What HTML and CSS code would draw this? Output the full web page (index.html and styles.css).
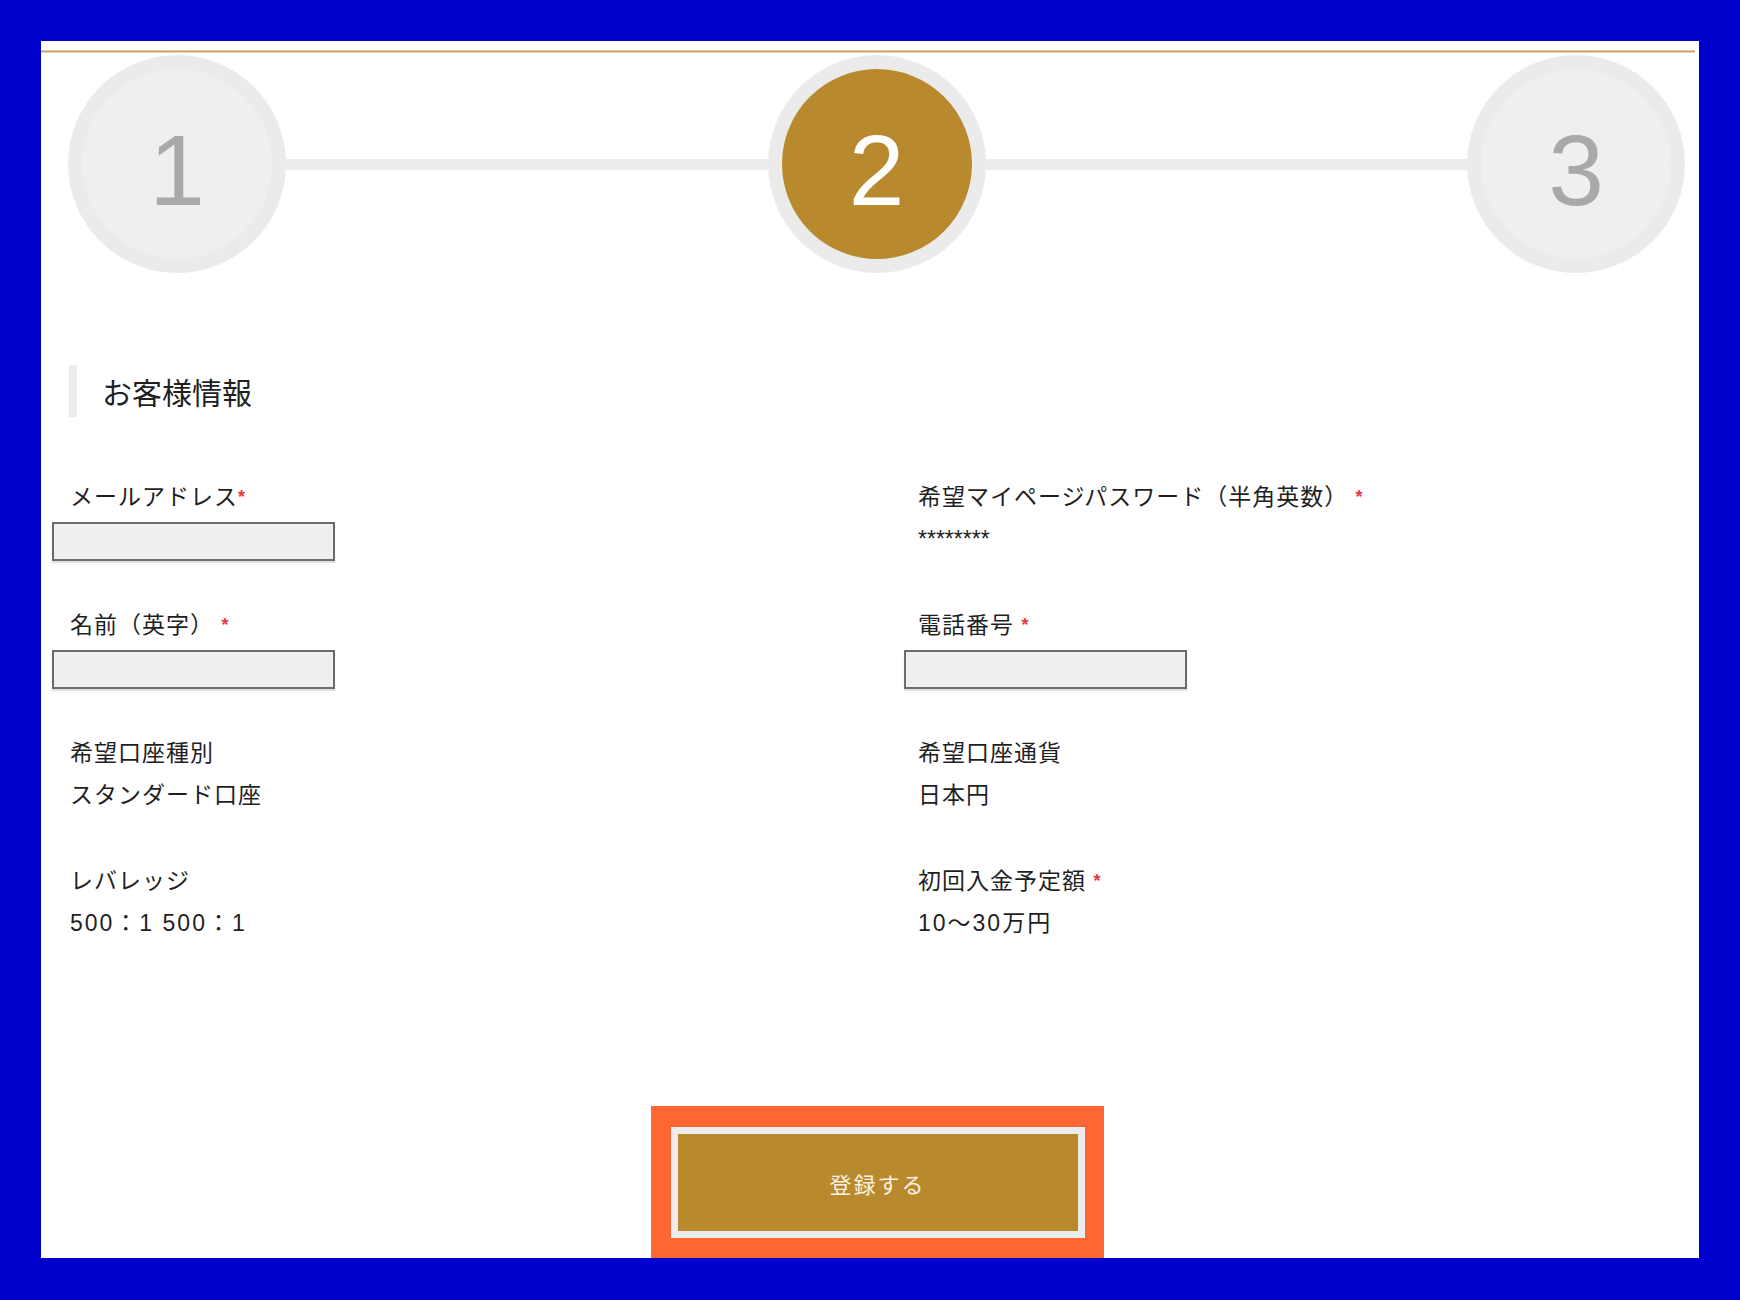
FILE: index.html
```html
<!DOCTYPE html>
<html lang="ja">
<head>
<meta charset="utf-8">
<title>お客様情報</title>
<link rel="stylesheet" href="styles.css">
</head>
<body>
<div class="panel">
  <div class="rule"></div>
  <div class="content">
    <div class="steps">
      <div class="step"><span class="num">1</span></div>
      <div class="connector"></div>
      <div class="step step-active"><span class="num">2</span></div>
      <div class="connector"></div>
      <div class="step"><span class="num">3</span></div>
    </div>

    <h2 class="section-title">お客様情報</h2>

    <div class="form-grid">
      <div class="field col-left">
        <div class="label">メールアドレス<span class="req">*</span></div>
        <div class="input"></div>
      </div>
      <div class="field col-right">
        <div class="label">希望マイページパスワード（半角英数） <span class="req">*</span></div>
        <div class="value password">********</div>
      </div>

      <div class="field col-left">
        <div class="label">名前（英字） <span class="req">*</span></div>
        <div class="input"></div>
      </div>
      <div class="field col-right">
        <div class="label">電話番号 <span class="req">*</span></div>
        <div class="input"></div>
      </div>

      <div class="field col-left">
        <div class="label">希望口座種別</div>
        <div class="value spaced">スタンダード口座</div>
      </div>
      <div class="field col-right">
        <div class="label">希望口座通貨</div>
        <div class="value spaced">日本円</div>
      </div>

      <div class="field col-left">
        <div class="label">レバレッジ</div>
        <div class="value numeric">500：1 500：1</div>
      </div>
      <div class="field col-right">
        <div class="label">初回入金予定額 <span class="req">*</span></div>
        <div class="value numeric">10〜30万円</div>
      </div>
    </div>

    <div class="actions">
      <div class="highlight">
        <button class="submit" type="button">登録する</button>
      </div>
    </div>
  </div>
</div>
</body>
</html>
```

FILE: styles.css
```css
* {
  box-sizing: border-box;
}

html, body {
  margin: 0;
  padding: 0;
}

body {
  background: #0000cc;
  padding: 41px;
  font-family: "Liberation Sans", "Noto Sans CJK JP", sans-serif;
  color: #1f1f1f;
}

.panel {
  background: #ffffff;
  height: 1217px;
  overflow: hidden;
  padding-top: 9px;
}

.rule {
  height: 3px;
  margin-right: 4px;
  background: linear-gradient(#e6cfa6 0, #e6cfa6 1px, #c59d5e 1px, #c59d5e 2px, #e9d8b9 2px);
}

.content {
  padding-left: 14px;
}

/* steps */
.steps {
  display: flex;
  align-items: center;
  padding: 0 14px 0 13px;
  margin-top: 2px;
}

.step {
  width: 218px;
  height: 218px;
  flex: 0 0 218px;
  border-radius: 50%;
  border: 14px solid #ebebec;
  background: #efeff0;
  display: flex;
  align-items: center;
  justify-content: center;
}

.step-active {
  border-color: #ebebeb;
  background: #b9892e;
}

.num {
  font-family: "Liberation Sans", Arial, sans-serif;
  font-size: 100px;
  line-height: 1;
  color: #a9a9aa;
  margin-top: 12px;
}

.step-active .num {
  color: #ffffff;
}

.connector {
  flex: 1;
  height: 11px;
  background: #ececec;
}

/* section title */
.section-title {
  margin: 92px 0 0 14px;
  height: 52px;
  border-left: 8px solid #ececec;
  padding-left: 25px;
  display: flex;
  align-items: center;
  font-family: "Noto Sans CJK JP", sans-serif;
  font-weight: 400;
  font-size: 30px;
  color: #1f1f1f;
}

/* form grid */
.form-grid {
  display: grid;
  grid-template-columns: 852px 1fr;
  row-gap: 49px;
  margin: 65px 0 0 -3px;
}

.field {
  display: flex;
  flex-direction: column;
  align-items: flex-start;
}

.col-left .label,
.col-left .value {
  padding-left: 18px;
}

.col-right .label,
.col-right .value {
  padding-left: 14px;
}

.label,
.value {
  font-size: 23px;
  line-height: 30px;
  letter-spacing: 1px;
  white-space: nowrap;
}

.value {
  margin-top: 12px;
}

.value.numeric {
  letter-spacing: 2px;
}

.value.spaced {
  padding-bottom: 7px;
}

.value.password {
  margin-top: 12px;
  font-size: 23px;
  letter-spacing: 0;
}

.req {
  display: inline-block;
  vertical-align: top;
  margin-top: 3px;
  color: #e33a3a;
  font-family: "Liberation Sans", sans-serif;
  font-size: 18px;
  font-weight: 700;
  letter-spacing: 0;
  line-height: 24px;
}

.input {
  margin-top: 10px;
  width: 283px;
  height: 39px;
  background: #efefef;
  border: 2px solid #6c6c6c;
  box-shadow: 0 2px 1px rgba(0, 0, 0, 0.12);
}

/* actions */
.actions {
  display: flex;
  justify-content: center;
  margin-top: 168px;
}

.highlight {
  background: #ff6633;
  padding: 21px 19px 20px 20px;
}

.submit {
  display: block;
  width: 414px;
  height: 111px;
  border: 7px solid #ececec;
  background: #b9892e;
  color: #f8f1e2;
  font-family: "Noto Sans CJK JP", sans-serif;
  font-size: 22px;
  letter-spacing: 2px;
  padding: 0;
  cursor: pointer;
}
```
